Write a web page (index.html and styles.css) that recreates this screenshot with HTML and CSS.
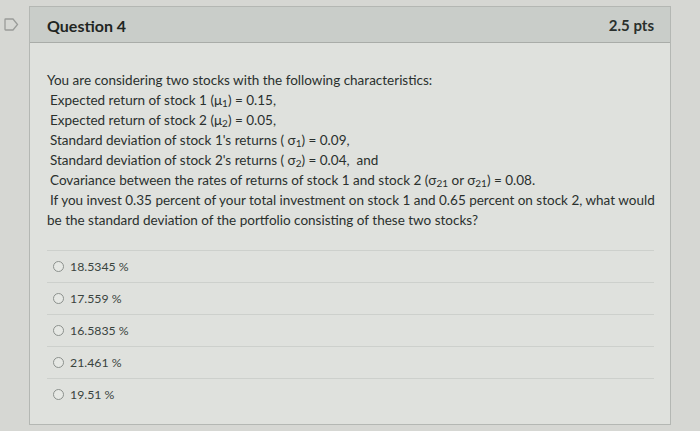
FILE: index.html
```html
<!DOCTYPE html>
<html>
<head>
<meta charset="utf-8">
<link rel="stylesheet" href="styles.css">
</head>
<body>
<div class="page">
  <div class="flag">
    <svg width="15" height="13" viewBox="0 0 15 13"><path d="M1.5 1 H9 L13.5 6.5 L9 12 H1.5 Q1 12 1 11.5 V1.5 Q1 1 1.5 1 Z" fill="none" stroke="#9a9c99" stroke-width="1.3"/></svg>
  </div>
  <div class="card">
    <div class="head">
      <span class="title">Question 4</span>
      <span class="pts">2.5 pts</span>
    </div>
    <div class="body">
      <div class="q">
        <div>You are considering two stocks with the following characteristics:</div>
        <div class="ind">Expected return of stock 1 (μ<sub>1</sub>) = 0.15,</div>
        <div class="ind">Expected return of stock 2 (μ<sub>2</sub>) = 0.05,</div>
        <div class="ind">Standard deviation of stock 1's returns ( σ<sub>1</sub>) = 0.09,</div>
        <div class="ind">Standard deviation of stock 2's returns ( σ<sub>2</sub>) = 0.04,&nbsp; and</div>
        <div class="ind">Covariance between the rates of returns of stock 1 and stock 2 (σ<sub>21</sub> or σ<sub>21</sub>) = 0.08.</div>
        <div class="ind">If you invest 0.35 percent of your total investment on stock 1 and 0.65 percent on stock 2, what would</div>
        <div>be the standard deviation of the portfolio consisting of these two stocks?</div>
      </div>
      <div class="answers">
        <div class="ans"><span class="radio"></span><span>18.5345 %</span></div>
        <div class="ans"><span class="radio"></span><span>17.559 %</span></div>
        <div class="ans"><span class="radio"></span><span>16.5835 %</span></div>
        <div class="ans"><span class="radio"></span><span>21.461 %</span></div>
        <div class="ans last"><span class="radio"></span><span>19.51 %</span></div>
      </div>
    </div>
  </div>
</div>
</body>
</html>
```
FILE: styles.css
```css
html, body {
  margin: 0;
  padding: 0;
}
body {
  width: 700px;
  height: 431px;
  overflow: hidden;
  background: #d6d7d3;
  font-family: Lato, "Open Sans", sans-serif;
  color: #2c322f;
}
.page {
  display: flex;
  align-items: flex-start;
  padding: 6px 0 0 4px;
}
.flag {
  width: 25px;
  padding-top: 12px;
  flex: none;
}
.flag svg { display: block; }
.card {
  width: 642px;
  height: 419px;
  box-sizing: border-box;
  border: 1px solid #b4b7b3;
  background: #dfe1dd;
  display: flex;
  flex-direction: column;
}
.head {
  height: 36px;
  box-sizing: border-box;
  background: #c9cdc9;
  border-bottom: 1px solid #a9aca8;
  display: flex;
  align-items: center;
  justify-content: space-between;
  padding: 1px 16px 0 17px;
}
.title {
  font-weight: 700;
  font-size: 16px;
  color: #1f2522;
}
.pts {
  font-weight: 700;
  font-size: 15px;
  color: #2a302d;
}
.body {
  padding: 27px 16px 0 17px;
}
.q {
  font-size: 13.5px;
  line-height: 20px;
  color: #2a302d;
  white-space: nowrap;
}
.q .ind { padding-left: 3px; }
sub {
  font-size: 10px;
  line-height: 0;
  vertical-align: -2px;
}
.answers {
  margin-top: 20px;
}
.ans {
  height: 32px;
  border-top: 1px solid #cdd0cc;
  box-sizing: border-box;
  display: flex;
  align-items: center;
  padding-left: 6px;
  font-size: 12.3px;
  color: #3a443e;
}
.radio {
  width: 9px;
  height: 9px;
  border: 1px solid #8c918d;
  border-radius: 50%;
  background: #e6e8e4;
  margin-right: 6px;
  flex: none;
}
```
